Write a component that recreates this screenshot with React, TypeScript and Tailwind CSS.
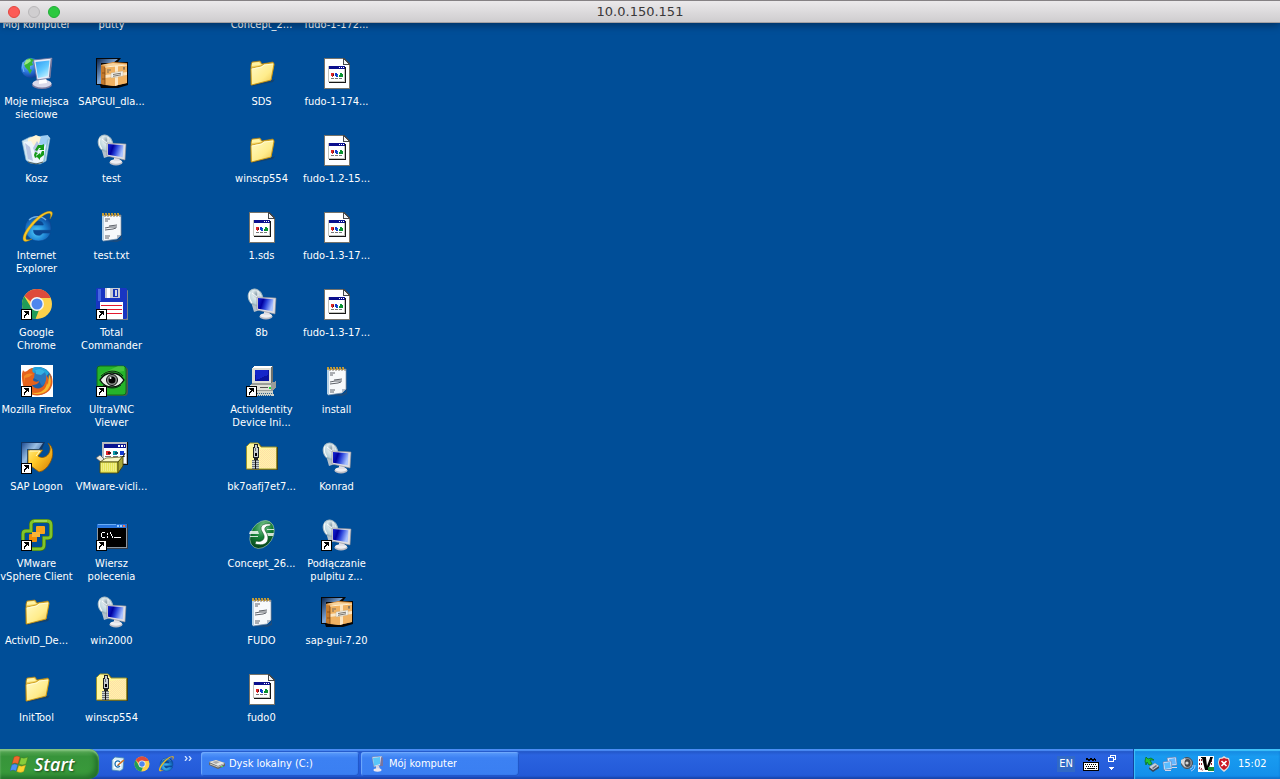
import type { ReactNode } from "react";

type IconProps = { className?: string };

function Svg({ children, className = "size-8", box = 32 }: { children: ReactNode; className?: string; box?: number }) {
  return (
    <svg viewBox={`0 0 ${box} ${box}`} className={`${className} shrink-0`} aria-hidden="true">
      {children}
    </svg>
  );
}

function ShortcutArrow() {
  return (
    <g shapeRendering="crispEdges">
      <rect x="0" y="21" width="11" height="11" fill="#000" />
      <rect x="1" y="22" width="9" height="9" fill="#fff" />
      <path d="M4 23h4v4h-1v-1h-1v1h-1v1h-1v2h-1v-3h1v-1h1v-1h-1v-1h-1v-1z" fill="#000" />
    </g>
  );
}

function NetworkIcon() {
  return (
    <Svg>
      <defs>
        <radialGradient id="net-globe" cx="0.35" cy="0.3" r="0.8">
          <stop offset="0" stopColor="#7fc2ff" />
          <stop offset="0.5" stopColor="#2b78df" />
          <stop offset="1" stopColor="#0a2f86" />
        </radialGradient>
        <linearGradient id="net-screen" x1="0" y1="0" x2="0.6" y2="1">
          <stop offset="0" stopColor="#2f9bf2" />
          <stop offset="0.6" stopColor="#62c9ff" />
          <stop offset="1" stopColor="#b4ecff" />
        </linearGradient>
      </defs>
      <circle cx="10" cy="11" r="10" fill="url(#net-globe)" />
      <path d="M5 3l4-2 5 2-3 2 1 3-3 1 0 3 2 1-2 4-2-4-3-3-1-4 2-1z" fill="#35b535" />
      <path d="M5 3l4-1 1 2-4 3-3 1z" fill="#9be884" />
      <path d="M2 5q-1 6 1 10" stroke="#8fd0ff" fill="none" opacity="0.700" />
      <ellipse cx="21" cy="28" rx="10" ry="4" fill="#7d7ca0" />
      <ellipse cx="21" cy="26.500" rx="9.500" ry="4" fill="#d9daea" />
      <path d="M18 21l7-1 1 6-8 1z" fill="#fff" />
      <path d="M12.500 3l18.500-2-2 20-13 2z" fill="#e5ebf8" stroke="#6a6e98" strokeWidth="0.800" />
      <path d="M14.500 5l14-1.600-1.700 15.600-9.800 2z" fill="url(#net-screen)" />
      <path d="M30.300 2l-1.800 18" stroke="#6f7196" strokeWidth="1.200" />
    </Svg>
  );
}

function SapBoxIcon() {
  return (
    <Svg>
      <defs>
        <linearGradient id="sapbox-blue" x1="0" y1="0" x2="1" y2="1">
          <stop offset="0" stopColor="#0a2650" />
          <stop offset="0.500" stopColor="#7fa7d6" />
          <stop offset="1" stopColor="#1c4a90" />
        </linearGradient>
      </defs>
      <path d="M0 1h25l-3 4h10v23l-10 3H5l-1-3H0z" fill="#060606" />
      <path d="M1 2h21l-5 4H5v21H1z" fill="url(#sapbox-blue)" />
      <path d="M5 8l12-3 14 1v20l-13 3-13-2z" fill="#d88d3a" />
      <path d="M5 8l12-2 14 1-12 3z" fill="#f7d39c" />
      <path d="M5 9l4 1v18l-4-1z" fill="#c47a2c" />
      <path d="M9 10l22-2v18l-13 3-9-1z" fill="#f0b262" />
      <path d="M19 9l3 0v19l-3 1zM9 18l22-3v3l-22 3z" fill="#fce6c2" />
      <path d="M9 10v18M6 16h3M6 22h3" stroke="#7e4712" strokeWidth="0.800" />
      <path d="M9 10l22-2" stroke="#fff0d0" strokeWidth="1" />
      <path d="M15 16l12-2v5l-12 2z" fill="#f3f1ea" stroke="#b9a88a" strokeWidth="0.400" />
      <path d="M17 17.500l8-1.300M17 19.300l8-1.500M11 13h4M11 15h2M27 11h2M28 10v3" stroke="#6b655c" strokeWidth="0.900" />
    </Svg>
  );
}

function BinIcon() {
  return (
    <Svg>
      <path d="M1 7l8-4 18-1 2 2-4 23-6 3-10-1-4-3z" fill="#cfe6f2" stroke="#8fb7d0" strokeWidth="0.600" />
      <path d="M7 5l8-4 7 3 3 6-9 3-9-3z" fill="#fff4d4" />
      <path d="M3 8l7-1 3 5 6-4 7 2-3 17-6 2-9-2z" fill="#eef6fc" />
      <path d="M20 2l7-1 1 4-5 8-5-3z" fill="#9dcdf3" />
      <path d="M4 9l5 4 3 14-5-2zM12 14l4-7 3 5-4 9z" fill="#b9c6e4" />
      <path d="M26 6l2-2-4 23-2 1z" fill="#8dc1d8" />
      <g fill="#149a18">
        <path d="M14 16l3-5 4 0 2-1v6l-5 0 2-2-2 0-2 3z" />
        <path d="M23 17v4l-4 3v2l-4-4 4-3v2l2-4z" />
        <path d="M14 18l3 1-2 2 1 2-2 1-1-3z" />
      </g>
      <path d="M7 28l8 2 7-2" stroke="#555f58" strokeWidth="1" fill="none" />
    </Svg>
  );
}

function RemoteIcon({ shortcut }: { shortcut?: boolean }) {
  return (
    <Svg>
      <defs>
        <radialGradient id="rdp-dish" cx="0.650" cy="0.350" r="0.750">
          <stop offset="0" stopColor="#8ba0ab" />
          <stop offset="0.350" stopColor="#dbe8ec" />
          <stop offset="0.750" stopColor="#b9d2da" />
          <stop offset="1" stopColor="#7f949f" />
        </radialGradient>
        <linearGradient id="rdp-screen" x1="0" y1="0" x2="1" y2="0.300">
          <stop offset="0" stopColor="#1526d4" />
          <stop offset="0.350" stopColor="#0000a0" />
          <stop offset="0.600" stopColor="#2b45dc" />
          <stop offset="1" stopColor="#a9c2ff" />
        </linearGradient>
      </defs>
      <path d="M6 17l7-1 1 6-6 2z" fill="#b4c1cc" />
      <ellipse cx="9.500" cy="9.500" rx="7" ry="8.800" transform="rotate(-22 9.500 9.500)" fill="url(#rdp-dish)" stroke="#a9bcc4" strokeWidth="1" />
      <path d="M4 4q-2 6 2 11" stroke="#f4fafc" strokeWidth="1.200" fill="none" />
      <path d="M6 5l6 5M12 3l0 7" stroke="#fff" strokeWidth="0.900" />
      <ellipse cx="20" cy="28.500" rx="6.500" ry="3" fill="#bbbcc4" />
      <ellipse cx="20" cy="27.500" rx="6" ry="2.200" fill="#eeeef2" />
      <path d="M18 22h5l1 5h-6z" fill="#e1e1e7" />
      <path d="M11 9l19 1-1 16-18-4z" fill="#dedee3" stroke="#8b8c96" strokeWidth="0.600" />
      <path d="M12 10l15.500 1.200-.8 12-14.700-2.500z" fill="url(#rdp-screen)" />
      {shortcut && <ShortcutArrow />}
    </Svg>
  );
}

function IeIcon({ className = "size-8" }: IconProps) {
  return (
    <Svg className={className}>
      <defs>
        <radialGradient id="ie-ball" cx="0.450" cy="0.650" r="0.650">
          <stop offset="0" stopColor="#53d2ff" />
          <stop offset="0.550" stopColor="#1d82d2" />
          <stop offset="1" stopColor="#0b4698" />
        </radialGradient>
      </defs>
      <circle cx="17" cy="17" r="12.500" fill="#0c468f" opacity="0.850" />
      <path d="M17.500 4C9 4 4 10.500 4 17.500S10 30 17.500 30c6 0 10-3 12-8h-8c-1 1.700-2.200 2.300-4 2.300-3 0-5-1.800-5-5H30C31 10 26 4 17.500 4zm-5 10c.500-2.800 2.300-4 5-4s4.500 1.300 4.800 4z" fill="url(#ie-ball)" stroke="#0b4690" strokeWidth="0.600" />
      <path d="M8 9c4-4 12-5 17 0" stroke="#9bdcff" strokeWidth="1.300" fill="none" opacity="0.700" />
      <path d="M29 8c3-4 3-7 1-7.500C26-1 16 5 9 14 3 21 .500 28 3 30c1.500 1.200 4.500 0 8-2-3 1-5.500 1.300-6 0C4 25 8 18.500 14 12 20 5.500 27 1 29 2.500c1 .800.700 3 0 5.500z" fill="#f8c623" stroke="#b88407" strokeWidth="0.400" />
    </Svg>
  );
}

function ChromeIcon({ className = "size-8", shortcut }: IconProps & { shortcut?: boolean }) {
  return (
    <Svg className={className}>
      <circle cx="16" cy="16" r="15" fill="#fdd14b" />
      <path d="M16 1A15 15 0 0 1 29.700 10H16a6.500 6.500 0 0 0-6 4L3.500 8A15 15 0 0 1 16 1z" fill="#de4b3c" />
      <path d="M3.200 8.200L10 19.200A6.500 6.500 0 0 0 18 22l-3.500 9A15 15 0 0 1 3.200 8.200z" fill="#209c58" />
      <circle cx="16" cy="16" r="7" fill="#f4f6f4" />
      <circle cx="16" cy="16" r="5.500" fill="#4f86ee" />
      {shortcut && <ShortcutArrow />}
    </Svg>
  );
}

function FloppyIcon() {
  return (
    <Svg>
      <path d="M1 3l29 0 2-1v30H4l-4-2z" fill="#77818d" />
      <path d="M1 0h29l1 1v29l-1 1H2l-2-2V1z" fill="#1836c2" />
      <path d="M2 1h3v12H2z" fill="#4668e0" />
      <path d="M9 0h15v10H9z" fill="#c8ccd4" />
      <path d="M11 0h3v10h-3z" fill="#fff" />
      <path d="M17 1h5v8h-5z" fill="#1836b6" />
      <path d="M19 2h2v6h-2z" fill="#d0d5e4" />
      <path d="M4 14h23v17H4z" fill="#fff" />
      <path d="M5 17h21v1H5zM5 21h21v1H5zM5 25h21v1H5z" fill="#e3182f" shapeRendering="crispEdges" />
      <ShortcutArrow />
    </Svg>
  );
}

function FirefoxIcon() {
  return (
    <Svg>
      <rect width="32" height="32" fill="#fff" />
      <circle cx="17" cy="16" r="14" fill="#1d5da6" />
      <path d="M10 4c6-4 14-2 18 4l-6 8-9-3z" fill="#1fa6dc" />
      <path d="M2 5c1 2 2 2 4 1 2-2 4-3 6-3-1 2-1 4 1 5 2 0 3 1 2 3-1 1-3 2-3 4 1 2 4 2 6 1 0 3-4 4-7 4 2 4 9 5 12 0 2-4 1-8-1-12 4 2 6 5 6 10 2-4 2-8 0-11 6 7 4 17-3 21-9 5-20 2-23-8C1 15 0 10 2 5z" fill="#e5621c" />
      <path d="M28 9c4 8 1 16-6 19-5 2-10 1-13-1 8 3 16-1 17-9l1 2z" fill="#f9b92d" />
      <path d="M3 11c3-3 6-3 9-2l-4 3-4 1-1 5z" fill="#f28a25" />
      <path d="M14 5c5-3 10 0 11 5 1 5-1 9-4 11l-3-5-5-3z" fill="#2a77bd" />
      <path d="M14 5c4-2 8-1 10 2l-4 3-5-1z" fill="#35b3e4" />
      <ShortcutArrow />
    </Svg>
  );
}

function UltraVncIcon() {
  return (
    <Svg>
      <rect x="2" y="2" width="30" height="29" rx="4" fill="#4b5852" />
      <rect x="1" y="1" width="29" height="29" rx="3" fill="#25b42a" stroke="#116b1b" strokeWidth="1" />
      <path d="M3 10L22 1h6v5z" fill="#65d54f" opacity="0.500" />
      <path d="M4 15c3-5 7-7 12-7s9 2 12 7c-3 5-7 7-12 7S7 20 4 15z" fill="#e9efe8" stroke="#06150a" strokeWidth="1.400" />
      <path d="M5 11c6-6 16-7 22 0M7 20c6 4 13 4 18 0" stroke="#0a2b10" strokeWidth="1" fill="none" />
      <circle cx="16" cy="15" r="5.500" fill="#8b918c" stroke="#0a0a0a" strokeWidth="1" />
      <circle cx="16" cy="15" r="3.500" fill="#050505" />
      <circle cx="14.500" cy="13" r="1" fill="#fff" />
      <ShortcutArrow />
    </Svg>
  );
}

function SapLogonIcon() {
  return (
    <Svg>
      <defs>
        <linearGradient id="sap-blue" x1="0" y1="0" x2="1" y2="0.700">
          <stop offset="0" stopColor="#1f4e94" />
          <stop offset="0.500" stopColor="#9ac0e4" />
          <stop offset="1" stopColor="#174487" />
        </linearGradient>
        <linearGradient id="sap-gold" x1="0" y1="0" x2="1" y2="1">
          <stop offset="0" stopColor="#fff6a0" />
          <stop offset="0.450" stopColor="#ffc928" />
          <stop offset="1" stopColor="#d57a00" />
        </linearGradient>
      </defs>
      <path d="M0 0h24l-3 7H6v16H0z" fill="#123765" />
      <path d="M1 1h21l-4 6H6v14H1z" fill="url(#sap-blue)" />
      <path d="M7 8h15l-5 6c4 3 9 1 11-3 2-4 1-7-1-10 6 4 6 13 2 20-3 5-6 8-11 9l-8-6-3-2z" fill="url(#sap-gold)" stroke="#81500a" strokeWidth="0.800" />
      <path d="M9 9h10l-4 5" stroke="#fffbd0" strokeWidth="1" fill="none" />
      <ShortcutArrow />
    </Svg>
  );
}

function InstallerIcon() {
  return (
    <Svg>
      <g shapeRendering="crispEdges">
        <rect x="6" y="0" width="26" height="23" fill="#111" />
        <rect x="6" y="0" width="25" height="22" fill="#b8bcc0" />
        <rect x="8" y="2" width="22" height="19" fill="#fff" />
        <rect x="8" y="2" width="22" height="4" fill="#0a1490" />
        <path d="M22 3h2v2h-2zM25 3h2v2h-2zM28 3h1v2h-1z" fill="#fff" />
        <path d="M10 9h4v4h-4z" fill="#e0242a" />
        <path d="M12 10h3v2h-3z" fill="#4c0d18" />
        <path d="M17 9h4v4h-4z" fill="#0a9ba8" />
        <path d="M19 10h3v2h-3z" fill="#0c4a64" />
        <path d="M24 9h4v4h-4z" fill="#1238cf" />
        <path d="M9 14h6v1H9zM17 14h5v1h-5zM24 14h5v1h-5z" fill="#777" />
      </g>
      <path d="M0 16l4-3 4 4-3 3z" fill="#eceae0" stroke="#555" strokeWidth="0.700" />
      <path d="M4 20l6-4 17-1-5 5z" fill="#fbf9c6" stroke="#504d0c" strokeWidth="0.700" />
      <path d="M4 20h18v11H4z" fill="#e8e55a" stroke="#504d0c" strokeWidth="0.900" />
      <path d="M22 20l5-6v10l-5 7z" fill="#a8a638" stroke="#45430a" strokeWidth="0.900" />
      <path d="M5 22h16M5 24h16M5 26h16M5 28h16" stroke="#f9f8bb" strokeDasharray="1 1" />
      <path d="M27 15l2-4" stroke="#111" />
    </Svg>
  );
}

function VsphereIcon() {
  return (
    <Svg>
      <path d="M14 2h12q4 0 4 4v10q0 3-3 3h-4v7q0 4-4 4H6q-4 0-4-4V15q0-3 3-3h5V5q0-3 4-3z" fill="none" stroke="#3b6b16" strokeWidth="4" />
      <path d="M14 2h12q4 0 4 4v10q0 3-3 3h-4v7q0 4-4 4H6q-4 0-4-4V15q0-3 3-3h5V5q0-3 4-3z" fill="none" stroke="#7fc52a" strokeWidth="2.800" />
      <path d="M13 2h13" stroke="#bdec82" />
      <rect x="15" y="7" width="9" height="8" rx="1" fill="#f8a31b" />
      <rect x="8" y="15" width="8" height="8" rx="1" fill="#ef8e0a" />
      <path d="M11 13h8v5h-8z" fill="#fab636" />
      <ShortcutArrow />
    </Svg>
  );
}

function ConsoleIcon() {
  return (
    <Svg>
      <g shapeRendering="crispEdges">
        <rect x="1" y="5" width="31" height="25" fill="#333b47" />
        <rect x="1" y="5" width="30" height="24" fill="#8d97a0" />
        <rect x="1" y="5" width="30" height="4" fill="#2875dc" />
        <rect x="2" y="5" width="18" height="1" fill="#69aef8" />
        <path d="M21 6h2v2h-2zM24 6h2v2h-2z" fill="#9ccfff" />
        <path d="M27 6h2v2h-2z" fill="#f07351" />
        <rect x="2" y="9" width="28" height="19" fill="#000" />
        <path d="M5 14h1v-1h3v1h-3v4h3v1h-3v-1h-1zM11 14h1v2h-1zM11 17h1v2h-1zM14 13h1v2h1v2h1v2h-1v-2h-1v-2h-1zM18 18h7v1h-7z" fill="#fff" />
      </g>
      <ShortcutArrow />
    </Svg>
  );
}

function FolderIcon() {
  return (
    <Svg>
      <defs>
        <linearGradient id="folder-front" x1="0" y1="0" x2="1" y2="1">
          <stop offset="0" stopColor="#fffbc9" />
          <stop offset="0.600" stopColor="#ffec8b" />
          <stop offset="1" stopColor="#eabf4a" />
        </linearGradient>
      </defs>
      <path d="M6 28l21-5 2-1-2 3-20 4z" fill="#223b53" opacity="0.600" />
      <path d="M5 8l1-3 8-1 2 3 11-2 1 3-3 15-20 5z" fill="#f2d263" stroke="#a47b16" strokeWidth="0.800" />
      <path d="M6 6l7-1 2 3-9 1z" fill="#fff4a5" />
      <path d="M5 12q0-1 1-1l9-2 3-2 9-1q1 0 1 1l-3 16L5.500 28z" fill="url(#folder-front)" stroke="#c7930e" strokeWidth="0.800" />
      <path d="M6 12l10-2 2-2 9-1" stroke="#fffce0" strokeWidth="0.800" fill="none" />
    </Svg>
  );
}

function ZipIcon() {
  return (
    <Svg>
      <defs>
        <pattern id="zip-dots" width="2" height="2" patternUnits="userSpaceOnUse">
          <rect width="2" height="2" fill="#fff3ab" />
          <path d="M0 0h1v1H0zM1 1h1v1H1z" fill="#ffe0a6" />
        </pattern>
      </defs>
      <path d="M1 4l3-3h9l3 4h16v23H1z" fill="#403e20" />
      <path d="M.500 4.500L4 1h8l3 4h15.500v22H.500z" fill="#fff79f" stroke="#98932e" />
      <path d="M14 8l16-2v20H14z" fill="url(#zip-dots)" />
      <g shapeRendering="crispEdges">
        <path d="M8 2h4v3h1v11h-1v2H8v-2H7V5h1z" fill="#202324" />
        <path d="M9 3h2v3h1v9H8V6h1z" fill="#c9cfd1" />
        <path d="M9 11h2v3H9z" fill="#000" />
        <path d="M9 6h1v3H9z" fill="#6a7072" />
        <path d="M6 18h7v9H6z" fill="#6d7478" />
        <path d="M6 19h3v1H6zM10 19h3v1h-3zM6 21h3v1H6zM10 21h3v1h-3zM6 23h3v1H6zM10 23h3v1h-3zM6 25h3v1H6zM10 25h3v1h-3z" fill="#c9cfd1" />
        <path d="M9 18h1v9H9z" fill="#111" />
      </g>
    </Svg>
  );
}

function FileIcon() {
  return (
    <Svg>
      <g shapeRendering="crispEdges">
        <path d="M3 1h20l6 6v25H3z" fill="#76736a" />
        <path d="M4 2h18v6h6v23H4z" fill="#fff" />
        <path d="M22 1v7h7V7l-6-6z" fill="#44474a" />
        <path d="M23 3l4 4h-4z" fill="#f2f2f2" />
        <rect x="8" y="10" width="17" height="16" fill="#161616" />
        <rect x="7" y="9" width="17" height="16" fill="#c3c4bd" />
        <rect x="8" y="12" width="15" height="12" fill="#fff" />
        <rect x="8" y="9" width="16" height="3" fill="#0b0f8e" />
        <path d="M18 10h1v1h-1zM20 10h1v1h-1zM22 10h1v1h-1z" fill="#fff" />
        <path d="M10 16h3v3h-1v1h-1v-1h-1z" fill="#df2525" />
        <path d="M12 17h1v2h-1z" fill="#60101b" />
        <path d="M14 16h2v1h1v1h-1v1h1v1h-2v-1h-1z" fill="#1238cf" />
        <path d="M16 18h1v1h-1z" fill="#0a9ba8" />
        <path d="M19 16h2v1h1v3h-4v-2h1z" fill="#08922e" />
        <path d="M10 21h3v1h-3zM14 21h3v1h-3zM18 21h3v1h-3z" fill="#777" />
      </g>
    </Svg>
  );
}

function NotepadIcon() {
  return (
    <Svg>
      <path d="M8 30l13-1 4-2V5l1 24-5 2z" fill="#334a66" opacity="0.600" />
      <path d="M7 4h18v20l-4 4-14 2z" fill="#f7f9fb" stroke="#8193a8" strokeWidth="0.700" />
      <path d="M6 4h2v26l-2-1z" fill="#b6d1e5" />
      <path d="M21 28v-4h4z" fill="#b2bbc8" />
      <path d="M7 2v3M10 2v3M13 2v3M16 2v3M19 2v3M22 2v3" stroke="#d5a52d" strokeWidth="1.800" />
      <path d="M9 3v3M12 3v3M15 3v3M18 3v3M21 3v3M24 3v3" stroke="#4d4230" strokeWidth="0.700" />
      <path d="M9 8h5M9 10h3M13 15l8-1M9 17l5-1 7 0M9 19l8-1 3-1M9 25h5M9 27h4" stroke="#4d5159" strokeWidth="0.900" fill="none" />
    </Svg>
  );
}

function ComputerIcon() {
  return (
    <Svg>
      <g shapeRendering="crispEdges">
        <path d="M6 3l3-2h18v15l-2 2H6z" fill="#6e716d" />
        <rect x="6" y="3" width="19" height="15" fill="#deded6" />
        <path d="M8 1h18l-1 2H6z" fill="#fff" />
        <rect x="9" y="5" width="14" height="11" fill="#0712a0" />
        <path d="M9 5h13v5L10 15z" fill="#1425c9" />
        <path d="M6 18h19l5-2v7l-4 3H3v-5z" fill="#9a9d98" />
        <path d="M4 20h21v5H4z" fill="#e0e0d7" />
        <path d="M14 22h8v1h-8z" fill="#555" />
        <path d="M23 22h2v2h-2z" fill="#21df37" />
        <path d="M6 26h21l1 5H4z" fill="#d0d3cb" />
        <path d="M11 28h15M12 30h14" stroke="#37678b" strokeDasharray="1 1" />
      </g>
      <ShortcutArrow />
    </Svg>
  );
}

function ConceptIcon() {
  return (
    <Svg>
      <defs>
        <radialGradient id="concept-ball" cx="0.350" cy="0.250" r="0.800">
          <stop offset="0" stopColor="#80c994" />
          <stop offset="0.500" stopColor="#138036" />
          <stop offset="1" stopColor="#063f19" />
        </radialGradient>
      </defs>
      <ellipse cx="16" cy="15.500" rx="11" ry="15" transform="rotate(32 16 15.500)" fill="url(#concept-ball)" stroke="#a3c9ad" strokeWidth="0.600" />
      <path d="M4 12h8l1 3H3zM4 17h8v1H4zM20 14h8l-1 3h-7zM21 10h7v1h-7z" fill="#fff" opacity="0.800" />
      <path d="M25 5c-6-1-10 1-10 4 0 4 4 6 3 10-1 3-4 4-8 3l-1 3c8 2 13 0 13-6 0-5-4-7-3-10 1-2 3-2 5-2z" fill="#fff" stroke="#0c4f20" strokeWidth="0.600" />
    </Svg>
  );
}

function DesktopQuickIcon() {
  return (
    <Svg box={16} className="size-4">
      <path d="M2 4l3-3 9 1-1 11-3 2-8-1z" fill="#d7edf6" stroke="#4686b4" strokeWidth="0.800" />
      <path d="M4 4h7v8H4z" fill="#fff" />
      <path d="M10 6c-2-2-5-1-5 2s3 4 5 2" stroke="#146db0" strokeWidth="1.300" fill="none" />
      <path d="M8 9l6-5" stroke="#d47021" strokeWidth="1.600" />
      <path d="M7 10l2-.5-1-1z" fill="#222" />
    </Svg>
  );
}

function DriveIcon() {
  return (
    <Svg box={16} className="size-4">
      <path d="M0 6l7-2 9 3v3l-7 3-9-4z" fill="#666" />
      <path d="M0 6l7-2 9 3-7 3z" fill="#e8e8e2" />
      <path d="M3 6l4-1 4 1-4 2z" fill="#aaa" />
      <path d="M1 8l8 3 6-3" stroke="#c8c8c4" fill="none" />
      <path d="M12 10h2v1h-2z" fill="#4fdb5a" />
    </Svg>
  );
}

function MyComputerIcon() {
  return (
    <Svg box={16} className="size-4">
      <path d="M3 1l10-1v9l-8 2z" fill="#dfe5f4" stroke="#7886aa" strokeWidth="0.600" />
      <path d="M4 2l7-1v7l-6 2z" fill="#59c6f9" />
      <path d="M12 1l2 1v8l-3 0z" fill="#7775a0" />
      <path d="M7 10h3l1 3H7z" fill="#d5d4e4" />
      <ellipse cx="8.500" cy="14" rx="4" ry="1.700" fill="#eee7ee" />
    </Svg>
  );
}

function KeyboardIcon() {
  return (
    <svg viewBox="0 0 16 14" className="h-3.5 w-4 shrink-0" shapeRendering="crispEdges" aria-hidden="true">
      <path d="M3 1h2v1h2V1h2v1h2V1h1v1h1v2h-1V3h-1v1H9V3H7v1H5V3H3z" fill="#000" />
      <rect x="0" y="5" width="16" height="9" fill="#000" />
      <rect x="1" y="6" width="14" height="7" fill="#fff" />
      <path d="M2 7.500h12M3 9.500h11" stroke="#000" strokeDasharray="1 1" />
      <path d="M2 11h1v1H2zM4 11h8v1H4zM13 11h1v1h-1z" fill="#000" />
    </svg>
  );
}

function SafeRemoveIcon() {
  return (
    <Svg box={16} className="size-4">
      <path d="M5 11l6-4 4 3v2l-6 4-4-3z" fill="#39475a" />
      <path d="M5 11l6-4 4 3-6 4z" fill="#c8ced8" />
      <path d="M8 12l4-3 1 1-4 3z" fill="#667" />
      <path d="M1 5l1-4 2 2 3-1 3 2-4 0 2 4-3 1-2-3-1 3z" fill="#25c233" stroke="#0a6c18" strokeWidth="0.700" />
    </Svg>
  );
}

function LanIcon() {
  return (
    <Svg box={16} className="size-4">
      <path d="M5 2l9-1 1 8-8 1z" fill="#e2eaff" stroke="#6678aa" strokeWidth="0.600" />
      <path d="M7 3l6-1 1 6-6 1z" fill="#63b7ff" />
      <path d="M1 6l8-1 1 8-8 1z" fill="#e6efff" stroke="#6678aa" strokeWidth="0.600" />
      <path d="M2 7l6-1 1 6-6 1z" fill="#58bcff" />
      <path d="M3 14h6v1H3zM10 11h5v1h-5z" fill="#d6d6ea" />
    </Svg>
  );
}

function VolumeIcon() {
  return (
    <Svg box={16} className="size-4">
      <circle cx="7" cy="7" r="5.500" fill="#91949b" stroke="#4a4d54" />
      <path d="M1 4l4-2 4 9-4 0-4-4z" fill="#d5d7da" />
      <ellipse cx="7.500" cy="7" rx="3" ry="4" fill="#44474d" />
      <circle cx="7" cy="7" r="1.600" fill="#d6d7d8" />
      <path d="M10 13c2 0 3-2 3-4M11 15c3-1 4-3 4-6" stroke="#adc8f7" fill="none" />
    </Svg>
  );
}

function VncTrayIcon() {
  return (
    <Svg box={16} className="size-4">
      <rect width="16" height="16" fill="#fff" />
      <path d="M1 4h3M1 8h4M1 12l4 2M11 8h4M11 5h4" stroke="#8c1d28" strokeDasharray="1 1" strokeWidth="2" />
      <path d="M3 1h5v1l1 8 3-8V1h3l-5 13H7L4 2H3z" fill="#000" />
      <rect x="10" y="11" width="6" height="4" fill="#1a8b37" />
    </Svg>
  );
}

function ShieldIcon() {
  return (
    <Svg box={16} className="size-4">
      <path d="M3 2q3 0 5-2 2 2 5 2l1 4c0 4-2 7-6 10C4 13 2 10 2 6z" fill="#e4d8d8" />
      <path d="M4 3q3 0 4-1 2 1 4 1l1 3c0 4-2 6-5 8-4-3-5-5-5-8z" fill="#cb1723" />
      <path d="M5.500 5l5 5m0-5l-5 5" stroke="#fff" strokeWidth="1.700" />
    </Svg>
  );
}

function WindowsFlag() {
  return (
    <svg viewBox="0 0 20 18" className="h-[18px] w-5 shrink-0" aria-hidden="true">
      <path d="M4 2q3-2 6 0L8 9Q5 7 2 9z" fill="#f0692d" stroke="#9d3c19" strokeWidth="0.400" />
      <path d="M11 2.500q3 1.500 7-.5l-2 7q-4 2-7 0z" fill="#87cd3b" stroke="#38751d" strokeWidth="0.400" />
      <path d="M1.700 10q3-2 6 0L6 16q-3-2-6 0z" fill="#4d91f3" stroke="#2355a5" strokeWidth="0.400" />
      <path d="M8.700 10.500q3 1.500 7-.5l-2 6.500q-3 2-7 0z" fill="#fbd32d" stroke="#a98512" strokeWidth="0.400" />
    </svg>
  );
}

type Item = { label: string; icon?: ReactNode };

const columns: Item[][] = [
  [
    { label: "Mój komputer" },
    { label: "Moje miejsca sieciowe", icon: <NetworkIcon /> },
    { label: "Kosz", icon: <BinIcon /> },
    { label: "Internet Explorer", icon: <IeIcon /> },
    { label: "Google Chrome", icon: <ChromeIcon shortcut /> },
    { label: "Mozilla Firefox", icon: <FirefoxIcon /> },
    { label: "SAP Logon", icon: <SapLogonIcon /> },
    { label: "VMware vSphere Client", icon: <VsphereIcon /> },
    { label: "ActivID_De...", icon: <FolderIcon /> },
    { label: "InitTool", icon: <FolderIcon /> },
  ],
  [
    { label: "putty" },
    { label: "SAPGUI_dla...", icon: <SapBoxIcon /> },
    { label: "test", icon: <RemoteIcon /> },
    { label: "test.txt", icon: <NotepadIcon /> },
    { label: "Total Commander", icon: <FloppyIcon /> },
    { label: "UltraVNC Viewer", icon: <UltraVncIcon /> },
    { label: "VMware-vicli...", icon: <InstallerIcon /> },
    { label: "Wiersz polecenia", icon: <ConsoleIcon /> },
    { label: "win2000", icon: <RemoteIcon /> },
    { label: "winscp554", icon: <ZipIcon /> },
  ],
  [],
  [
    { label: "Concept_2..." },
    { label: "SDS", icon: <FolderIcon /> },
    { label: "winscp554", icon: <FolderIcon /> },
    { label: "1.sds", icon: <FileIcon /> },
    { label: "8b", icon: <RemoteIcon /> },
    { label: "ActivIdentity Device Ini...", icon: <ComputerIcon /> },
    { label: "bk7oafj7et7...", icon: <ZipIcon /> },
    { label: "Concept_26...", icon: <ConceptIcon /> },
    { label: "FUDO", icon: <NotepadIcon /> },
    { label: "fudo0", icon: <FileIcon /> },
  ],
  [
    { label: "fudo-1-172..." },
    { label: "fudo-1-174...", icon: <FileIcon /> },
    { label: "fudo-1.2-15...", icon: <FileIcon /> },
    { label: "fudo-1.3-17...", icon: <FileIcon /> },
    { label: "fudo-1.3-17...", icon: <FileIcon /> },
    { label: "install", icon: <NotepadIcon /> },
    { label: "Konrad", icon: <RemoteIcon /> },
    { label: "Podłączanie pulpitu z...", icon: <RemoteIcon shortcut /> },
    { label: "sap-gui-7.20", icon: <SapBoxIcon /> },
  ],
];

function DesktopItem({ label, icon }: Item) {
  return (
    <button type="button" className="flex h-[77px] w-[75px] shrink-0 flex-col items-center gap-1.5">
      {icon ?? <span className="size-8 shrink-0" />}
      <span className="w-[75px] text-center text-[11px] leading-[13px] text-white">{label}</span>
    </button>
  );
}

function TitleBar() {
  return (
    <header className="relative z-10 grid h-[23px] shrink-0 grid-cols-[1fr_auto_1fr] items-center border-t border-b border-t-[#858184] border-b-[#a5a2a4] bg-linear-to-b from-[#ebe9eb] to-[#cfcdcf] px-2 shadow-[0_2px_8px_rgba(0,0,0,0.4)]">
      <div className="flex gap-2">
        <button type="button" aria-label="Close" className="size-3 rounded-full border border-[#e2463f] bg-[#fc5b57]" />
        <button type="button" aria-label="Minimize" className="size-3 rounded-full border border-[#b9b7b9] bg-[#d0ced0]" />
        <button type="button" aria-label="Zoom" className="size-3 rounded-full border border-[#1fae35] bg-[#2bc940]" />
      </div>
      <h1 className="font-['DejaVu_Sans',sans-serif] text-[13px] leading-5 text-[#3a383a]">10.0.150.151</h1>
    </header>
  );
}

function TaskButton({ icon, children }: { icon: ReactNode; children: ReactNode }) {
  return (
    <button
      type="button"
      className="flex h-6 w-[158px] min-w-0 items-center gap-1 rounded-[3px] bg-linear-to-b from-[#5a9bfb] via-[#3c81f3] via-25% to-[#3a7ff2] px-2 text-[11px] text-white shadow-[inset_-1px_-1px_1px_#1f54c6,inset_1px_1px_1px_#71aafd]"
    >
      {icon}
      <span className="truncate">{children}</span>
    </button>
  );
}

function Taskbar() {
  return (
    <footer className="flex h-[30px] shrink-0 items-stretch bg-linear-to-b from-[#1d4fb8] via-[#2a63e0] via-20% to-[#2258d6] shadow-[inset_0_2px_1px_#4b8cf5,inset_0_-2px_2px_#1a45ab]">
      <button
        type="button"
        className="flex w-[99px] items-center gap-1 rounded-r-[10px] bg-linear-to-b from-[#5eac5b] via-[#37943a] via-25% to-[#3a9c3b] pl-2.5 shadow-[inset_0_2px_2px_#86c581,inset_-4px_-3px_5px_#22702a]"
      >
        <WindowsFlag />
        <span className="font-['Open_Sans',sans-serif] text-[18px] leading-6 font-semibold text-white italic [text-shadow:1px_1px_2px_#1b4c1e]">Start</span>
      </button>
      <nav aria-label="Quick launch" className="flex w-[102px] items-center gap-2 pl-[11px]">
        <button type="button" aria-label="Show desktop"><DesktopQuickIcon /></button>
        <button type="button" aria-label="Google Chrome"><ChromeIcon className="size-4" /></button>
        <button type="button" aria-label="Internet Explorer"><IeIcon className="size-4" /></button>
        <button type="button" aria-label="More" className="self-start pt-[7px] pl-0.5">
          <svg viewBox="0 0 8 5" className="h-[5px] w-2" fill="none" stroke="#cfe1ff" strokeWidth="1.300" aria-hidden="true">
            <path d="M1 0l2 2.500L1 5M5 0l2 2.500L5 5" />
          </svg>
        </button>
      </nav>
      <div className="flex min-w-0 flex-1 items-center gap-0.5">
        <TaskButton icon={<DriveIcon />}>Dysk lokalny (C:)</TaskButton>
        <TaskButton icon={<MyComputerIcon />}>Mój komputer</TaskButton>
      </div>
      <div className="flex items-center gap-2 pr-4">
        <button type="button" className="h-4 w-4.5 bg-[#3169c6] text-center text-[11px] leading-4 text-white">EN</button>
        <button type="button" aria-label="Keyboard"><KeyboardIcon /></button>
        <button type="button" aria-label="Language options" className="pb-1">
          <svg viewBox="0 0 10 18" className="h-[18px] w-2.5" aria-hidden="true">
            <path d="M3.500 5V2.500h5v4h-2M1.500 4.500h5v4h-5z" fill="none" stroke="#fff" shapeRendering="crispEdges" />
            <path d="M2 14h5v1H6v1H5v1H4v-1H3v-1H2z" fill="#fff" shapeRendering="crispEdges" />
          </svg>
        </button>
      </div>
      <div className="flex w-[147px] items-center gap-0.5 border-l border-[#1442a0] bg-linear-to-b from-[#1683dd] via-[#189bf0] via-25% to-[#138eea] pl-2.5 shadow-[inset_1px_2px_1px_#3fc4fb,inset_0_-2px_2px_#1073cd]">
        <SafeRemoveIcon />
        <LanIcon />
        <VolumeIcon />
        <VncTrayIcon />
        <ShieldIcon />
        <time className="pl-1 text-[11px] text-white">15:02</time>
      </div>
    </footer>
  );
}

export default function App() {
  return (
    <div className="flex h-screen flex-col overflow-hidden bg-[#004e98] font-['DejaVu_Sans_Condensed','DejaVu_Sans',sans-serif]">
      <TitleBar />
      <main className="-ml-px flex min-h-0 flex-1 overflow-hidden">
        {columns.map((column, index) => (
          <div key={index} className="-mt-[43px] flex w-[75px] shrink-0 flex-col">
            {column.map((item, row) => (
              <DesktopItem key={row} {...item} />
            ))}
          </div>
        ))}
      </main>
      <Taskbar />
    </div>
  );
}
